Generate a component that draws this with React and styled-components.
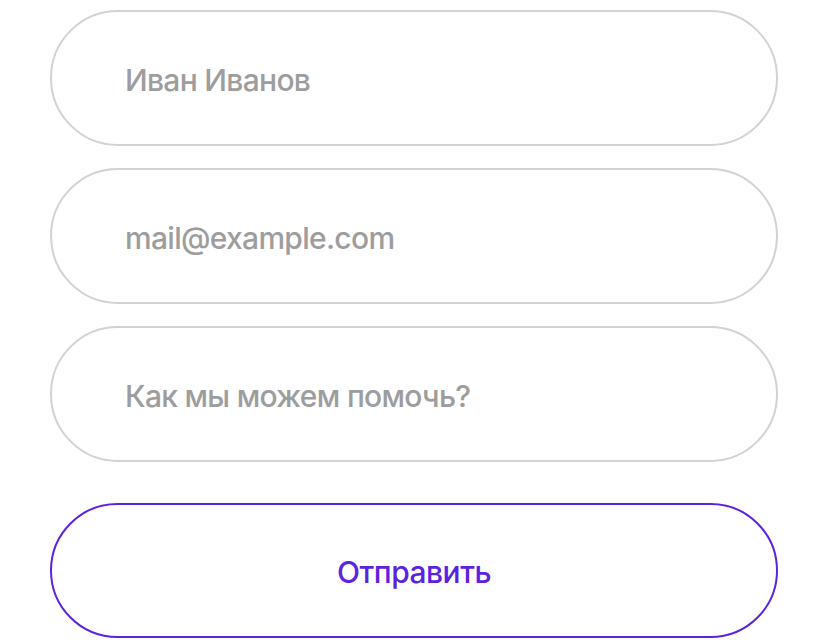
import React from "react";
import styled, { createGlobalStyle } from "styled-components";

const Global = createGlobalStyle`
  html, body { margin: 0; padding: 0; background: #fff; }
  body { font-family: Inter, "Noto Sans", sans-serif; }
  * { box-sizing: border-box; }
`;

const Form = styled.form`
  display: flex;
  flex-direction: column;
  padding: 10px 50px 0;
  width: 828px;
`;

const Fields = styled.div`
  display: flex;
  flex-direction: column;
  gap: 22px;
`;

const Field = styled.input`
  height: 136px;
  width: 100%;
  border: 2px solid #d2d2d2;
  border-radius: 68px;
  padding: 4px 0 0 73px;
  font-family: Inter, "Noto Sans", sans-serif;
  font-size: 30px;
  font-weight: 500;
  letter-spacing: -0.7px;
  color: #333;
  background: #fff;
  outline: none;
  &::placeholder { color: #9d9d9d; }
`;

const Submit = styled.button`
  margin-top: 41px;
  height: 135px;
  width: 100%;
  border: 2px solid #5b22e0;
  border-radius: 68px;
  background: #fff;
  color: #5b22e0;
  font-family: Inter, "Noto Sans", sans-serif;
  font-size: 30px;
  font-weight: 500;
  letter-spacing: -0.5px;
  padding-top: 4px;
  cursor: pointer;
`;

export default function App() {
  return (
    <>
      <Global />
      <Form onSubmit={(e) => e.preventDefault()}>
        <Fields>
          <Field placeholder="Иван Иванов" />
          <Field placeholder="mail@example.com" />
          <Field placeholder="Как мы можем помочь?" />
        </Fields>
        <Submit type="submit">Отправить</Submit>
      </Form>
    </>
  );
}
